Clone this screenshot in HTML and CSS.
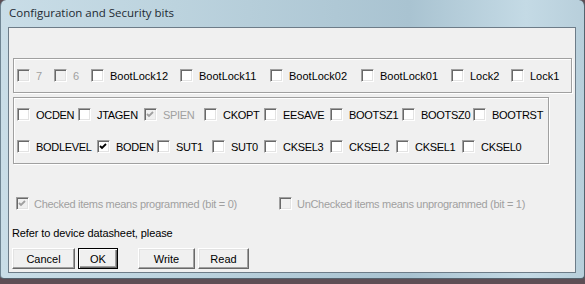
FILE: index.html
```html
<!DOCTYPE html>
<html>
<head>
    <title>Configuration and Security bits</title>
    <meta name="viewport" content="width=device-width, initial-scale=1">
    <link rel="stylesheet" href="styles.css">
</head>
<body>
    <div class="window">
        <div class="titlebar">Configuration and Security bits</div>
        <div class="client">

            <div class="group group-lock">
                <div class="row row-lock">
                    <label class="bit disabled"><span class="cb"></span>7</label>
                    <label class="bit disabled"><span class="cb"></span>6</label>
                    <label class="bit"><span class="cb"></span>BootLock12</label>
                    <label class="bit"><span class="cb"></span>BootLock11</label>
                    <label class="bit"><span class="cb"></span>BootLock02</label>
                    <label class="bit"><span class="cb"></span>BootLock01</label>
                    <label class="bit"><span class="cb"></span>Lock2</label>
                    <label class="bit"><span class="cb"></span>Lock1</label>
                </div>
            </div>

            <div class="group group-fuse">
                <div class="row row-high">
                    <label class="bit"><span class="cb"></span>OCDEN</label>
                    <label class="bit"><span class="cb"></span>JTAGEN</label>
                    <label class="bit disabled"><span class="cb"><svg viewBox="0 0 11 11"><polyline points="2,5 4,7 8,3" /></svg></span>SPIEN</label>
                    <label class="bit"><span class="cb"></span>CKOPT</label>
                    <label class="bit"><span class="cb"></span>EESAVE</label>
                    <label class="bit"><span class="cb"></span>BOOTSZ1</label>
                    <label class="bit"><span class="cb"></span>BOOTSZ0</label>
                    <label class="bit"><span class="cb"></span>BOOTRST</label>
                </div>
                <div class="row row-low">
                    <label class="bit"><span class="cb"></span>BODLEVEL</label>
                    <label class="bit"><span class="cb"><svg viewBox="0 0 11 11"><polyline points="2,5 4,7 8,3" /></svg></span>BODEN</label>
                    <label class="bit"><span class="cb"></span>SUT1</label>
                    <label class="bit"><span class="cb"></span>SUT0</label>
                    <label class="bit"><span class="cb"></span>CKSEL3</label>
                    <label class="bit"><span class="cb"></span>CKSEL2</label>
                    <label class="bit"><span class="cb"></span>CKSEL1</label>
                    <label class="bit"><span class="cb"></span>CKSEL0</label>
                </div>
            </div>

            <div class="legend">
                <label class="note disabled"><span class="cb"><svg viewBox="0 0 11 11"><polyline points="2,5 4,7 8,3" /></svg></span>Checked items means programmed (bit = 0)</label>
                <label class="note disabled"><span class="cb"></span>UnChecked items means unprogrammed (bit = 1)</label>
            </div>

            <p class="hint">Refer to device datasheet, please</p>

            <div class="buttons">
                <button class="btn btn-cancel">Cancel</button>
                <button class="btn btn-ok">OK</button>
                <button class="btn btn-write">Write</button>
                <button class="btn btn-read">Read</button>
            </div>

        </div>
    </div>
    <div class="behind"></div>
</body>
</html>
```

FILE: styles.css
```css
body {
    margin: 0;
    background-color: #5e4e55;
    font-family: "Liberation Sans", Arial, sans-serif;
}

.window {
    width: 585px;
    height: 279px;
    box-sizing: border-box;
    padding: 0 8px 5px 8px;
    background: linear-gradient(to right, #c9dde7, #bcd3de 30%, #a9c3d1 70%, #c4dae5 90%, #b8cfdb);
    border-left: 1px solid #6f8593;
    border-right: 1px solid #55636e;
    border-bottom: 1px solid #55636e;
    border-radius: 6px 6px 4px 4px;
}

.titlebar {
    height: 27px;
    line-height: 25px;
    font-family: "Open Sans", "Noto Sans", sans-serif;
    font-size: 11.5px;
    color: #1e2a33;
}

.client {
    height: 246px;
    box-sizing: border-box;
    margin-left: -1px;
    background-color: #f0f0f0;
    border: 1px solid #6d7c88;
    padding: 30px 0 0 4px;
    font-size: 11px;
    color: #000;
}

.group {
    box-sizing: border-box;
    border: 1px solid #a0a0a0;
    box-shadow: inset 1px 1px 0 #fff, 1px 1px 0 #fff;
}

.group-lock {
    width: 559px;
    height: 35px;
    display: flex;
    align-items: center;
    padding-left: 3px;
}

.group-fuse {
    width: 536px;
    height: 67px;
    margin-top: 4px;
    padding: 10px 0 0 3px;
}

.row {
    display: grid;
    height: 13px;
    align-items: center;
}

.row-lock {
    grid-template-columns: 37px 37px 89px 90px 91px 90px 60px auto;
}

.row-high,
.row-low {
    letter-spacing: -0.3px;
}

.row-high {
    grid-template-columns: 61px 66px 60px 60px 66px 72px 71px auto;
}

.row-low {
    margin-top: 19px;
    grid-template-columns: 80px 60px 55px 52px 66px 66px 66px auto;
}

.bit,
.note {
    display: flex;
    align-items: center;
    white-space: nowrap;
    height: 13px;
}

.cb {
    width: 13px;
    height: 13px;
    box-sizing: border-box;
    flex: none;
    margin-right: 6px;
    background-color: #fff;
    border: 1px solid;
    border-color: #a0a0a0 #fff #fff #a0a0a0;
    box-shadow: inset 1px 1px 0 #696969, inset -1px -1px 0 #e3e3e3;
}

.cb svg {
    display: block;
    width: 11px;
    height: 11px;
}

.cb polyline {
    fill: none;
    stroke: #000;
    stroke-width: 1.8;
}

.disabled {
    color: #a0a0a0;
}

.disabled .cb {
    background-color: #f0f0f0;
}

.disabled .cb polyline {
    stroke: #a0a0a0;
}

.legend {
    display: grid;
    grid-template-columns: 263px auto;
    margin-top: 33px;
    padding-left: 3px;
    height: 13px;
    font-size: 11px;
    letter-spacing: -0.3px;
}

.note .cb {
    margin-right: 5px;
}

.hint {
    margin: 16px 0 0 -1px;
    font-size: 11px;
    line-height: 14px;
    letter-spacing: -0.1px;
}

.buttons {
    display: flex;
    margin: 8px 0 0 -1px;
}

.btn {
    height: 21px;
    box-sizing: border-box;
    padding: 0;
    margin-right: 3px;
    font-family: "Liberation Sans", Arial, sans-serif;
    font-size: 11px;
    color: #000;
    background-color: #f0f0f0;
    border: 1px solid;
    border-color: #fff #696969 #696969 #fff;
    box-shadow: inset -1px -1px 0 #a0a0a0, inset 1px 1px 0 #e3e3e3;
}

.btn-cancel {
    width: 63px;
}

.btn-ok {
    width: 40px;
    margin-right: 20px;
    border: 1px solid #000;
    box-shadow: inset 1px 1px 0 #fff, inset -1px -1px 0 #696969, inset -2px -2px 0 #a0a0a0;
}

.btn-write {
    width: 57px;
}

.btn-read {
    width: 51px;
}
```
